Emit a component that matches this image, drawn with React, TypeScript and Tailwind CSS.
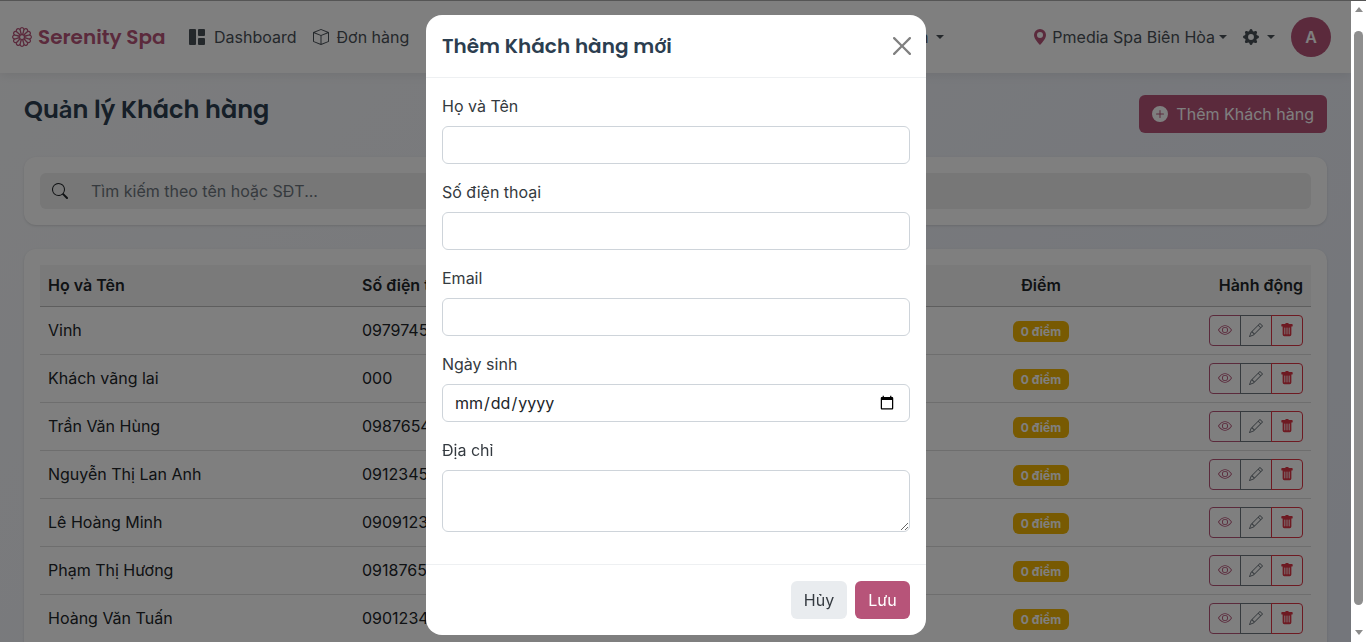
import { BsGrid1X2Fill, BsBox, BsFlower1, BsGeoAltFill, BsGearFill, BsPlusCircleFill, BsSearch, BsEye, BsPencil, BsTrashFill } from "react-icons/bs";

const customers = [
  ["Vinh", "0979745612"],
  ["Khách vãng lai", "000"],
  ["Trần Văn Hùng", "0987654321"],
  ["Nguyễn Thị Lan Anh", "0912345678"],
  ["Lê Hoàng Minh", "0909123456"],
  ["Phạm Thị Hương", "0918765432"],
  ["Hoàng Văn Tuấn", "0901234567"],
];

function Caret({ className = "ml-1" }: { className?: string }) {
  return <span className={`${className} inline-block w-0 h-0 border-x-[4.8px] border-x-transparent border-t-[4.8px] border-t-[#495057]`} />;
}

function Field({ label, children }: { label: string; children: React.ReactNode }) {
  return (
    <div className="mb-4">
      <label className="block mb-2 text-[16px] leading-6 text-[#343a40]">{label}</label>
      {children}
    </div>
  );
}

const inputClass = "block w-full h-[38px] px-3 border border-[#ced4da] rounded-md bg-white text-[16px] text-[#212529] outline-none";
const dateClass = "block w-full h-[38px] pl-[11px] pr-3 border border-[#ced4da] rounded-md bg-white text-[16px] text-[#212529] outline-none";

export default function App() {
  return (
    <div className="h-screen overflow-hidden">
      <div className="mr-[15px] min-h-[682px] bg-[linear-gradient(135deg,#f8f9fb_0%,#e8ecf6_100%)] font-['Inter','Liberation_Sans',sans-serif] text-[#212529]">
        <nav className="h-[73px] flex items-center justify-between pl-3 pr-5 bg-white shadow-[0_2px_10px_rgba(0,0,0,0.08)]">
          <div className="flex items-center text-[16px]">
            <BsFlower1 className="w-5 h-5 text-[#b75479]" />
            <span className="ml-1.5 w-[127px] font-['Poppins','Inter',sans-serif] text-[20px] font-semibold text-[#b75479] whitespace-nowrap">Serenity Spa</span>
            <div className="ml-6 flex items-center text-[#495057]">
              <BsGrid1X2Fill className="w-4 h-4" />
              <span className="ml-[9px]">Dashboard</span>
            </div>
            <div className="ml-4 flex items-center text-[#495057]">
              <BsBox className="w-4 h-4" />
              <span className="ml-2">Đơn hàng</span>
            </div>
            <div className="ml-[423px] flex items-center text-[#495057] whitespace-nowrap">
              <span>Quản trị viên</span>
              <Caret className="ml-2" />
            </div>
          </div>
          <div className="flex items-center text-[16px] text-[#495057]">
            <BsGeoAltFill className="w-4 h-4 text-[#b75479]" />
            <span className="ml-1">Pmedia Spa Biên Hòa</span>
            <Caret />
            <BsGearFill className="ml-4 w-4 h-4" />
            <Caret className="ml-2" />
            <div className="ml-4 w-10 h-10 rounded-full bg-[#b75479] text-white font-semibold flex items-center justify-center">A</div>
          </div>
        </nav>

        <main className="px-6 pt-[22px]">
          <div className="flex items-start justify-between mb-6">
            <h1 className="text-[24px] leading-[30px] font-semibold text-[#2c3e50] font-['Poppins','Inter',sans-serif]">Quản lý Khách hàng</h1>
            <button className="h-[38px] px-[13px] flex items-center rounded-md bg-[#b75479] text-white text-[16px]">
              <BsPlusCircleFill className="w-4 h-4 mr-2" />
              Thêm Khách hàng
            </button>
          </div>

          <section className="bg-white rounded-xl p-4 mb-6 shadow-sm">
            <div className="h-9 flex items-center rounded-md bg-[#eeeeee]">
              <BsSearch className="ml-3 w-4 h-4 text-[#212529]" />
              <span className="ml-[23px] text-[#6c757d]">Tìm kiếm theo tên hoặc SĐT...</span>
            </div>
          </section>

          <section className="bg-white rounded-xl p-4 shadow-sm">
            <table className="w-full border-collapse text-[16px]">
              <thead>
                <tr className="h-[41px] bg-[#f5f5f5] border-b border-[#bdbdbd] font-semibold">
                  <th className="w-[314px] px-2 text-left font-semibold">Họ và Tên</th>
                  <th className="px-2 text-left font-semibold">Số điện thoại</th>
                  <th className="w-[100px] px-2 text-center font-semibold">Điểm</th>
                  <th className="w-[220px] px-2 text-right font-semibold">Hành động</th>
                </tr>
              </thead>
              <tbody>
                {customers.map(([name, phone]) => (
                  <tr key={name} className="h-12 border-b border-[#dcdcdc]">
                    <td className="px-2">{name}</td>
                    <td className="px-2">{phone}</td>
                    <td className="px-2 text-center">
                      <span className="inline-block h-[21px] px-2 rounded-md bg-[#f0b505] text-white text-[12px] font-bold leading-[21px]">0 điểm</span>
                    </td>
                    <td className="px-2">
                      <div className="flex justify-end">
                        <button className="w-8 h-[31px] flex items-center justify-center border border-[#b75479] rounded-l-[4px] text-[#b75479]"><BsEye className="w-3.5 h-3.5" /></button>
                        <button className="w-8 h-[31px] -ml-px flex items-center justify-center border border-[#6c757d] text-[#6c757d]"><BsPencil className="w-3.5 h-3.5" /></button>
                        <button className="w-8 h-[31px] -ml-px flex items-center justify-center border border-[#dc3545] rounded-r-[4px] text-[#dc3545]"><BsTrashFill className="w-3.5 h-3.5" /></button>
                      </div>
                    </td>
                  </tr>
                ))}
              </tbody>
            </table>
          </section>
        </main>

        <div className="fixed inset-y-0 left-0 right-[15px] bg-black/50" />

        <div className="fixed left-[426px] top-[15px] w-[500px] h-[620px] bg-white rounded-2xl flex flex-col">
          <div className="h-[63px] flex items-center justify-between px-4 border-b border-[#eef0f2]">
            <h2 className="text-[20px] font-semibold text-[#2c3e50] font-['Poppins','Inter',sans-serif]">Thêm Khách hàng mới</h2>
            <svg viewBox="0 0 16 16" className="w-[18px] h-[18px] mr-[-1px] text-[#808080]" fill="currentColor">
              <path d="M.293.293a1 1 0 0 1 1.414 0L8 6.586 14.293.293a1 1 0 1 1 1.414 1.414L9.414 8l6.293 6.293a1 1 0 0 1-1.414 1.414L8 9.414l-6.293 6.293a1 1 0 0 1-1.414-1.414L6.586 8 .293 1.707a1 1 0 0 1 0-1.414z" />
            </svg>
          </div>
          <div className="flex-1 p-4">
            <Field label="Họ và Tên"><input className={inputClass} /></Field>
            <Field label="Số điện thoại"><input className={inputClass} /></Field>
            <Field label="Email"><input className={inputClass} /></Field>
            <Field label="Ngày sinh"><input type="date" className={dateClass} /></Field>
            <Field label="Địa chỉ"><textarea className="block w-full h-[62px] px-3 py-1.5 border border-[#ced4da] rounded-md bg-white outline-none" /></Field>
          </div>
          <div className="h-[71px] flex items-center justify-end gap-2 px-4 border-t border-[#eef0f2]">
            <button className="w-14 h-[38px] rounded-md bg-[#e9ecef] text-[#343a40] text-[16px]">Hủy</button>
            <button className="w-[55px] h-[38px] rounded-md bg-[#b75479] text-white text-[16px]">Lưu</button>
          </div>
        </div>
      </div>

      <div className="fixed inset-y-0 right-0 w-[15px] bg-white flex flex-col items-center justify-between pt-[7px] pb-[7px]">
        <span className="w-0 h-0 border-x-[4.5px] border-x-transparent border-b-[5px] border-b-[#8c8c8c]" />
        <span className="absolute top-[31px] left-[3px] w-[9px] h-[574px] rounded-full bg-[#8e8e8e]" />
        <span className="w-0 h-0 border-x-[4.5px] border-x-transparent border-t-[5px] border-t-[#8c8c8c]" />
      </div>
      <div className="fixed top-0 inset-x-0 h-px bg-[#555555]" />
    </div>
  );
}
